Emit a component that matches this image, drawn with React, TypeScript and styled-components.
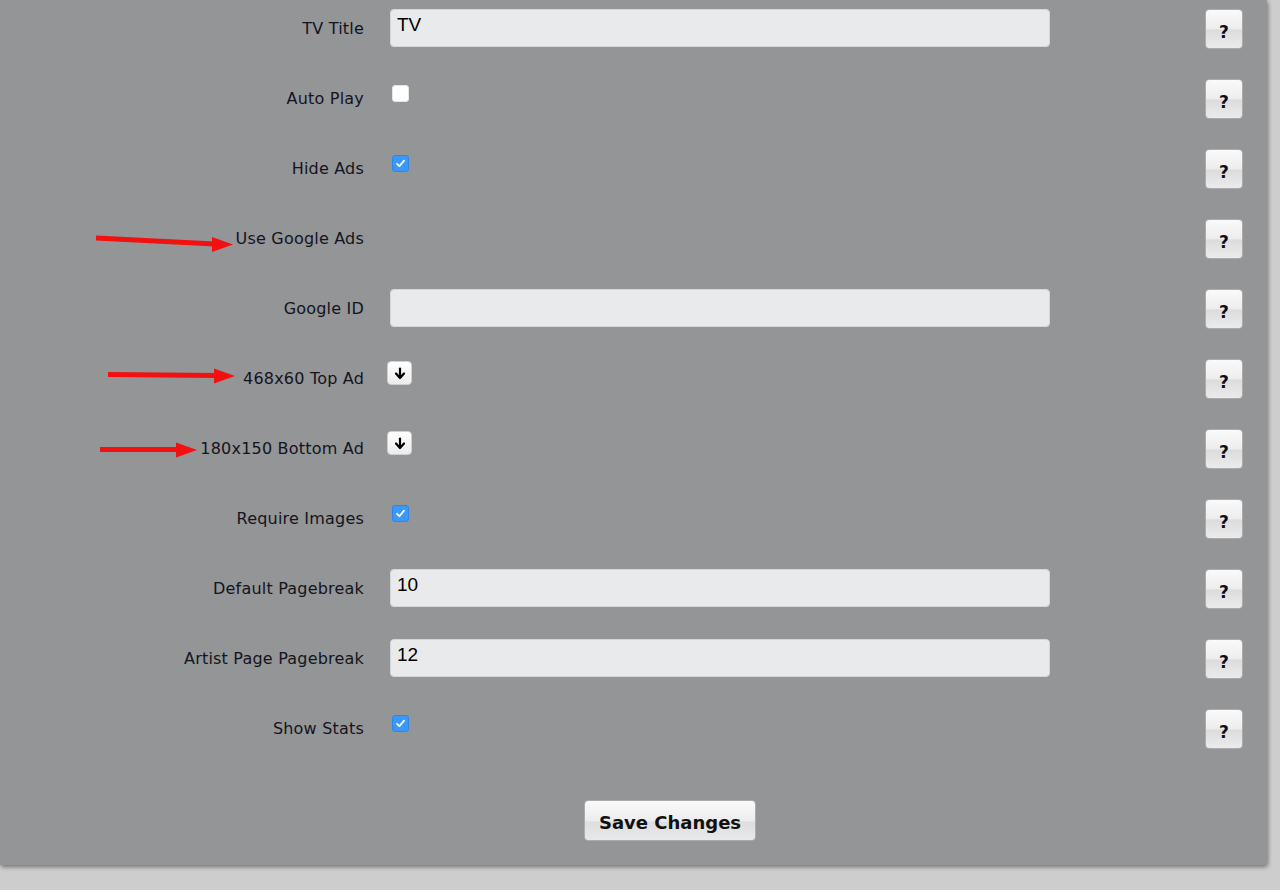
import React from "react";
import styled, { createGlobalStyle } from "styled-components";

const Global = createGlobalStyle`
  html, body { margin: 0; padding: 0; background: #cecece; }
  body { font-family: "DejaVu Sans", "Open Sans", sans-serif; }
`;

const Page = styled.div`
  width: 1280px;
  height: 890px;
  overflow: hidden;
  background: #cdcdcd;
`;

const Panel = styled.div`
  width: 1267px;
  height: 865px;
  background: #939596;
  border-bottom-right-radius: 4px;
  box-shadow: 1px 2px 4px rgba(0, 0, 0, 0.45);
  display: flex;
  flex-direction: column;
`;

const Row = styled.div`
  position: relative;
  height: 70px;
  box-sizing: border-box;
  padding-top: 9px;
  display: grid;
  grid-template-columns: 364px 660px 1fr 38px;
  column-gap: 26px;
  align-items: start;
  padding-right: 24px;
`;

const Label = styled.label`
  position: relative;
  text-align: right;
  line-height: 39px;
  font-size: 16px;
  color: #14141e;
  font-family: "DejaVu Sans", "Open Sans", sans-serif;
  letter-spacing: 0.2px;
  white-space: nowrap;
`;

const TextInput = styled.input`
  box-sizing: border-box;
  width: 660px;
  height: 38px;
  border: 1px solid #d6d7d8;
  border-radius: 4px;
  background: #e9eaeb;
  padding: 0 6px;
  font-family: "Liberation Sans", Arial, sans-serif;
  font-size: 19px;
  color: #000;
  line-height: 30px;
  padding-bottom: 7px;
  outline: none;
`;

const Check = styled.span<{ $checked?: boolean }>`
  display: inline-flex;
  align-items: center;
  justify-content: center;
  margin-top: 6px;
  margin-left: 2px;
  width: 17px;
  height: 17px;
  box-sizing: border-box;
  border-radius: 3px;
  background: ${(p) => (p.$checked ? "#3a98fb" : "#ffffff")};
  border: 1px solid ${(p) => (p.$checked ? "#2f86e8" : "#e6e6e6")};
`;

const ArrowBtn = styled.span`
  display: inline-flex;
  align-items: center;
  justify-content: center;
  margin-top: 2px;
  margin-left: -3px;
  width: 25px;
  height: 24px;
  border-radius: 4px;
  background: linear-gradient(#ffffff, #ececec);
  border: 1px solid #cfcfcf;
  box-sizing: border-box;
`;

const HelpBtn = styled.button`
  width: 38px;
  height: 40px;
  border-radius: 4px;
  border: 1px solid #a9abac;
  background: linear-gradient(#fafafa 0%, #ededed 50%, #dcdcdc 52%, #ebebeb 100%);
  font-family: "DejaVu Sans", Verdana, sans-serif;
  font-weight: bold;
  font-size: 17px;
  color: #0e0e1a;
  padding: 0;
  padding-top: 5px;
`;

const Field = styled.div`
  display: flex;
  align-items: flex-start;
`;

const Footer = styled.div`
  display: flex;
  justify-content: center;
  padding-top: 30px;
  padding-left: 73px;
`;

const SaveBtn = styled.button`
  width: 172px;
  height: 41px;
  border-radius: 4px;
  border: 1px solid #a9abac;
  background: linear-gradient(#fafafa 0%, #ededed 50%, #dedede 55%, #e9e9e9 100%);
  font-family: "DejaVu Sans", Verdana, sans-serif;
  font-weight: bold;
  font-size: 18px;
  color: #111;
  padding: 0;
  padding-top: 3px;
`;

const ArrowMark = styled.svg`
  position: absolute;
  top: 0;
  pointer-events: none;
`;

const CheckIcon = () => (
  <svg width="11" height="11" viewBox="0 0 11 11">
    <path d="M2 5.8 L4.4 8.2 L9 2.6" fill="none" stroke="#fff" strokeWidth="1.8" strokeLinecap="round" strokeLinejoin="round" />
  </svg>
);

const DownIcon = () => (
  <svg width="12" height="13" viewBox="0 0 12 13">
    <path d="M6 1.5 V10" stroke="#000" strokeWidth="2.2" strokeLinecap="round" />
    <path d="M2 6.5 L6 11 L10 6.5" fill="none" stroke="#000" strokeWidth="2.2" strokeLinecap="round" strokeLinejoin="round" />
  </svg>
);

type Annot = { left: number; width: number; y1: number; y2: number };

const RedArrow = ({ a }: { a: Annot }) => {
  const w = a.width;
  return (
    <ArrowMark width={w} height="60" viewBox={`0 0 ${w} 60`} style={{ left: a.left }}>
      <line x1="0" y1={a.y1} x2={w - 18} y2={a.y2} stroke="#f21010" strokeWidth="5" />
      <polygon points={`${w - 21},${a.y2 - 7} ${w},${a.y2 + 0.5} ${w - 21},${a.y2 + 8}`} fill="#f21010" />
    </ArrowMark>
  );
};

type RowDef = {
  label: string;
  kind: "text" | "check" | "empty" | "arrow";
  value?: string;
  checked?: boolean;
  annot?: Annot;
};

const rows: RowDef[] = [
  { label: "TV Title", kind: "text", value: "TV" },
  { label: "Auto Play", kind: "check", checked: false },
  { label: "Hide Ads", kind: "check", checked: true },
  { label: "Use Google Ads", kind: "empty", annot: { left: 96, width: 137, y1: 28, y2: 34 } },
  { label: "Google ID", kind: "text", value: "" },
  { label: "468x60 Top Ad", kind: "arrow", annot: { left: 108, width: 127, y1: 24.5, y2: 25.5 } },
  { label: "180x150 Bottom Ad", kind: "arrow", annot: { left: 100, width: 97, y1: 29.5, y2: 29.5 } },
  { label: "Require Images", kind: "check", checked: true },
  { label: "Default Pagebreak", kind: "text", value: "10" },
  { label: "Artist Page Pagebreak", kind: "text", value: "12" },
  { label: "Show Stats", kind: "check", checked: true },
];

export default function App() {
  return (
    <Page>
      <Global />
      <Panel>
        {rows.map((r) => (
          <Row key={r.label}>
            <Label>{r.label}</Label>
            {r.annot && <RedArrow a={r.annot} />}
            <Field>
              {r.kind === "text" && <TextInput defaultValue={r.value} />}
              {r.kind === "check" && <Check $checked={r.checked}>{r.checked && <CheckIcon />}</Check>}
              {r.kind === "arrow" && (
                <ArrowBtn>
                  <DownIcon />
                </ArrowBtn>
              )}
            </Field>
            <span />
            <HelpBtn>?</HelpBtn>
          </Row>
        ))}
        <Footer>
          <SaveBtn>Save Changes</SaveBtn>
        </Footer>
      </Panel>
    </Page>
  );
}
